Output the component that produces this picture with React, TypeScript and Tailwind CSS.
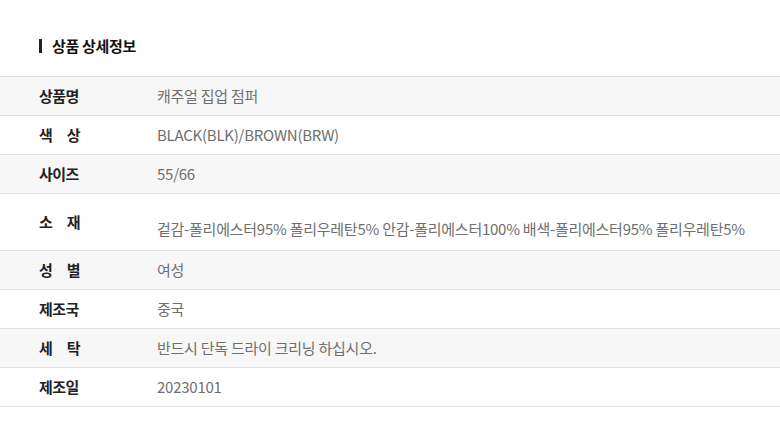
import React, { JSX } from "react";

interface Row {
  label: string;
  value: string;
  spaced?: boolean;
  tall?: boolean;
}

const rows: Row[] = [
  { label: "상품명", value: "캐주얼 집업 점퍼" },
  { label: "색상", value: "BLACK(BLK)/BROWN(BRW)", spaced: true },
  { label: "사이즈", value: "55/66" },
  { label: "소재", value: "겉감-폴리에스터95% 폴리우레탄5% 안감-폴리에스터100% 배색-폴리에스터95% 폴리우레탄5%", spaced: true, tall: true },
  { label: "성별", value: "여성", spaced: true },
  { label: "제조국", value: "중국" },
  { label: "세탁", value: "반드시 단독 드라이 크리닝 하십시오.", spaced: true },
  { label: "제조일", value: "20230101" },
];

export default function App(): JSX.Element {
  return (
    <div
      className="w-[780px] h-[445px] bg-white overflow-hidden"
      style={{ fontFamily: '"Noto Sans CJK KR", "Noto Sans", sans-serif' }}
    >
      <div className="flex items-center h-[76px] pl-[39px] pt-[16px]">
        <span className="w-[3px] h-[14px] bg-[#222] mr-[10px]" />
        <h2 className="text-[15px] font-bold text-[#111] tracking-[-0.3px]">상품 상세정보</h2>
      </div>

      <div className="border-t border-[#e2e2e2]">
        {rows.map((r, i) => (
          <div
            key={r.label}
            className={`flex border-b border-[#e2e2e2] ${i % 2 === 0 ? "bg-[#f7f7f7]" : "bg-white"} ${r.tall ? "h-[57px]" : "h-[39px]"}`}
          >
            <div className="w-[157px] pl-[39px] flex items-center text-[15px] font-bold text-[#222] tracking-[-0.5px]">
              {r.spaced ? (
                <span className="flex justify-between w-[41px]">
                  <span>{r.label[0]}</span>
                  <span>{r.label[1]}</span>
                </span>
              ) : (
                <span>{r.label}</span>
              )}
            </div>
            <div
              className={`flex-1 flex text-[15px] text-[#6f6f6f] tracking-[-0.25px] ${r.tall ? "items-end pb-[10px]" : "items-center"}`}
            >
              {r.value}
            </div>
          </div>
        ))}
      </div>
    </div>
  );
}
